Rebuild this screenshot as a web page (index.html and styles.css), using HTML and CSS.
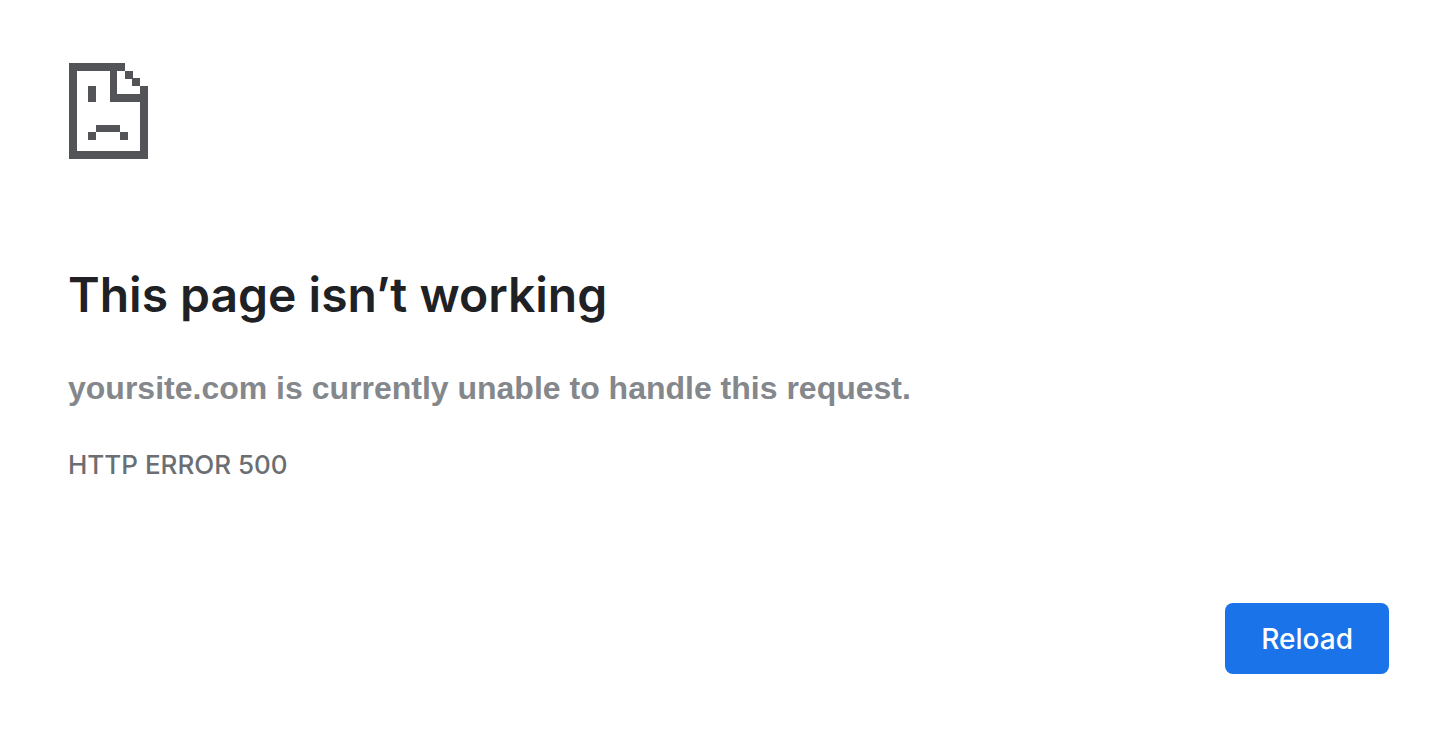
FILE: index.html
```html
<!DOCTYPE html>
<html lang="en">
<head>
  <meta charset="utf-8">
  <meta name="viewport" content="width=device-width, initial-scale=1">
  <title>This page isn’t working</title>
  <link rel="stylesheet" href="styles.css">
</head>
<body>
  <main class="error-page">
    <svg class="error-icon" viewBox="0 0 80 96" aria-hidden="true">
      <path d="M1 0H57V8H49V31H72V23H80V96H1ZM9 8V88H72V39H42V8Z" fill-rule="evenodd"/>
      <path d="M57 8h8v8h-8zM64 15h8v8h-8zM20 23h8v16h-8zM28 62h24v7H28zM20 69h8v8h-8zM52 69h8v8h-8z"/>
    </svg>
    <h1 class="error-title">This page isn’t working</h1>
    <p class="error-message">yoursite.com is currently unable to handle this request.</p>
    <p class="error-code">HTTP ERROR 500</p>
    <div class="actions">
      <button class="reload-button" type="button">Reload</button>
    </div>
  </main>
</body>
</html>
```
FILE: styles.css
```css
body {
  margin: 0;
  background: #fff;
  font-family: Inter, "Liberation Sans", sans-serif;
}

.error-page {
  padding: 63px 67px 76px 68px;
}

.error-icon {
  display: block;
  width: 80px;
  height: 96px;
  fill: #535457;
  shape-rendering: crispEdges;
}

.error-title {
  margin: 104px 0 0;
  font-size: 48px;
  font-weight: 600;
  line-height: 64px;
  color: #202124;
}

.error-message {
  margin: 41px 0 0;
  font-family: "Liberation Sans", Arial, sans-serif;
  font-size: 32px;
  font-weight: 700;
  line-height: 40px;
  color: #84878b;
}

.error-code {
  margin: 41px 0 0;
  font-size: 26px;
  font-weight: 500;
  line-height: 32px;
  color: #6b6e72;
}

.actions {
  display: flex;
  justify-content: flex-end;
  margin-top: 122px;
}

.reload-button {
  padding: 18px 36px 17px;
  border: 0;
  border-radius: 8px;
  background: #1a73e8;
  color: #fff;
  font-family: inherit;
  font-size: 28px;
  font-weight: 500;
  line-height: 36px;
  cursor: pointer;
}
```
